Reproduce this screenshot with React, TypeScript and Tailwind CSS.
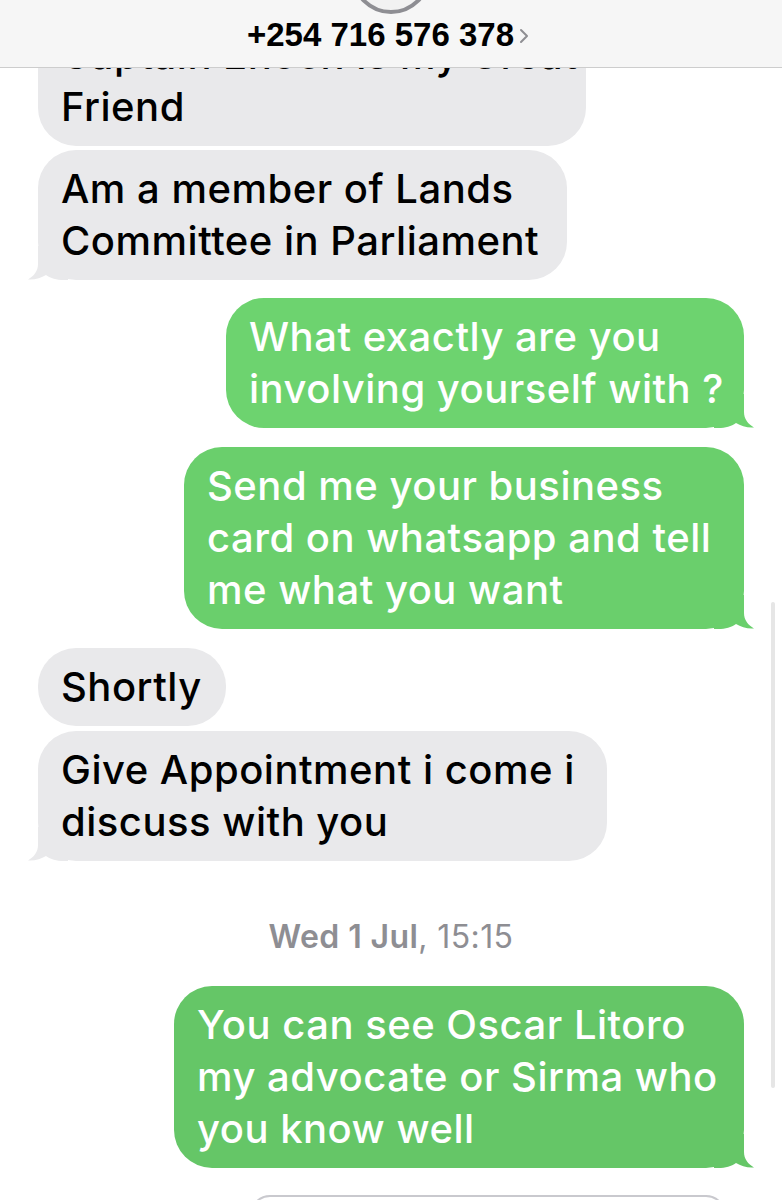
import React from 'react'

type Message = {
  from: 'them' | 'me'
  lines: string[]
  width: number
  gap: number
  tail: boolean
  color?: string
}

const messages: Message[] = [
  { from: 'them', lines: ['Captain Enoch is my Great', 'Friend'], width: 548, gap: 0, tail: false },
  { from: 'them', lines: ['Am a member of Lands', 'Committee in Parliament'], width: 529, gap: 4, tail: true },
  { from: 'me', lines: ['What exactly are you', 'involving yourself with ?'], width: 518, gap: 18, tail: true, color: '#6dd36f' },
  {
    from: 'me',
    lines: ['Send me your business', 'card on whatsapp and tell', 'me what you want'],
    width: 560,
    gap: 19,
    tail: true,
    color: '#6acf6c',
  },
  { from: 'them', lines: ['Shortly'], width: 188, gap: 19, tail: false },
  { from: 'them', lines: ['Give Appointment i come i', 'discuss with you'], width: 569, gap: 5, tail: true },
]

const lastMessage: Message = {
  from: 'me',
  lines: ['You can see Oscar Litoro', 'my advocate or Sirma who', 'you know well'],
  width: 570,
  gap: 31,
  tail: true,
  color: '#65c667',
}

const GRAY = '#e9e9eb'

export default function App() {
  return (
    <div className="relative w-[782px] h-[1200px] overflow-hidden bg-white" style={{ fontFamily: 'Inter, "Liberation Sans", sans-serif' }}>
      <div className="flex flex-col px-[38px] pt-[16px]">
        {messages.map((m, i) => (
          <Bubble key={i} m={m} />
        ))}

        <div className="mt-[58px] text-center text-[32px] leading-[36px] tracking-[0.4px] text-[#8e8e93]">
          <span className="font-semibold">Wed 1 Jul</span>, 15:15
        </div>

        <Bubble m={lastMessage} />

        <div className="mt-[27px] ml-[212px] w-[476px] h-[40px] shrink-0 rounded-full border-2 border-[#c9c9ce]" />
      </div>

      {/* scroll indicator */}
      <div className="absolute right-[7px] top-[602px] w-[4px] h-[486px] rounded-full bg-[#e6e6e6]" />

      {/* navigation header */}
      <div className="absolute top-0 left-0 right-0 h-[68px] bg-[#f6f6f6] border-b border-[#cdcdcd] overflow-hidden">
        <div className="absolute left-[351px] top-[-66px] w-[80px] h-[80px] rounded-full border-4 border-[#8e8e93] bg-[#f2f2f2]" />
        <div className="absolute left-0 right-0 top-[15px] h-[40px] flex items-center justify-center gap-[5px] pr-[6px]">
          <span
            className="text-[33px] leading-[40px] font-bold text-black"
            style={{ fontFamily: '"Liberation Sans", Arial, sans-serif' }}
          >
            +254 716 576 378
          </span>
          <svg width="10" height="16" viewBox="0 0 10 16" className="mt-[2px]">
            <path d="M2 2l6 6-6 6" fill="none" stroke="#8e8e93" strokeWidth={2} strokeLinecap="round" strokeLinejoin="round" />
          </svg>
        </div>
      </div>
    </div>
  )
}

function Bubble({ m }: { m: Message }) {
  const mine = m.from === 'me'
  const bg = mine ? m.color ?? '#6acf6c' : GRAY
  return (
    <div className={mine ? 'flex justify-end' : 'flex justify-start'} style={{ marginTop: m.gap }}>
      <div
        className={
          'relative rounded-[38px] px-[23px] py-[13px] text-[40px] leading-[52px] font-medium tracking-[0.5px] whitespace-nowrap ' +
          (mine ? 'text-white' : 'text-black')
        }
        style={{ width: m.width, backgroundColor: bg }}
      >
        {m.tail && (mine ? <RightTail color={bg} /> : <LeftTail color={bg} />)}
        <div className="relative">
          {m.lines.map((l, i) => (
            <div key={i}>{l}</div>
          ))}
        </div>
      </div>
    </div>
  )
}

function LeftTail({ color }: { color: string }) {
  return (
    <svg className="absolute left-[-10px] bottom-0" width="40" height="34" viewBox="0 0 40 34">
      <path d="M10 0 L10 18 C10 25 6 30 0 33.5 C7 34 13 32 18 29 C23 32.5 28 34 36 34 L40 34 L40 0 Z" fill={color} />
    </svg>
  )
}

function RightTail({ color }: { color: string }) {
  return (
    <svg className="absolute right-[-10px] bottom-0" width="40" height="34" viewBox="0 0 40 34">
      <path d="M30 0 L30 18 C30 25 34 30 40 33.5 C33 34 27 32 22 29 C17 32.5 12 34 4 34 L0 34 L0 0 Z" fill={color} />
    </svg>
  )
}
